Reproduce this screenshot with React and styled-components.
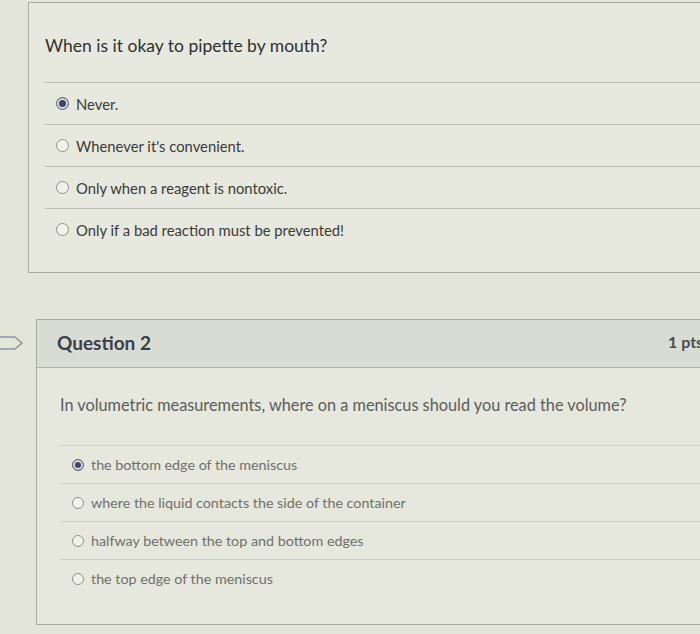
import React from 'react';
import styled, { createGlobalStyle } from 'styled-components';

const GlobalStyle = createGlobalStyle`
    html, body {
        margin: 0;
        padding: 0;
        background: #e3e5d9;
    }
    body {
        font-family: Lato, "Open Sans", "Liberation Sans", sans-serif;
    }
`

const Page = styled.div`
    width: 700px;
    height: 634px;
    overflow: hidden;
    background: #e3e5d9;
    display: flex;
    flex-direction: column;
`

const FirstCard = styled.div`
    margin-top: 2px;
    margin-left: 28px;
    width: 690px;
    flex-shrink: 0;
    border-top: 1px solid #a9aca3;
    border-left: 1px solid #a9aca3;
    border-bottom: 1px solid #a9aca3;
    background: #e7e9de;
    padding: 33px 0 22px 16px;
    box-sizing: border-box;
`

const BigQuestion = styled.div`
    font-size: 17.5px;
    color: #2f302e;
    line-height: 20px;
    margin-bottom: 26px;
`

const Answers = styled.div`
    display: flex;
    flex-direction: column;
`

const Answer = styled.div`
    display: flex;
    align-items: center;
    gap: ${p => p.$gap || 8}px;
    height: ${p => p.$h}px;
    border-top: 1px solid ${p => p.$line || '#b9bcb2'};
    padding-left: ${p => p.$pad}px;
    box-sizing: border-box;
    font-size: ${p => p.$size}px;
    color: ${p => p.$color};
`

const Radio = styled.span`
    width: ${p => p.$d}px;
    height: ${p => p.$d}px;
    border-radius: 50%;
    box-sizing: border-box;
    flex-shrink: 0;
    border: 1.5px solid ${p => (p.$on ? '#6d7080' : '#8d8f8a')};
    background: ${p => (p.$on ? '#3f4563' : '#f1f2ec')};
    box-shadow: ${p => (p.$on ? 'inset 0 0 0 2px #d9dbe3' : 'none')};
`

const Row = styled.div`
    display: flex;
    margin-top: 46px;
`

const Side = styled.div`
    width: 36px;
    flex-shrink: 0;
    height: 48px;
    display: flex;
    align-items: center;
`

const SecondCard = styled.div`
    width: 684px;
    flex-shrink: 0;
    border: 1px solid #a9aca3;
    border-right: none;
    background: #e6e8dd;
    height: 306px;
    box-sizing: border-box;
`

const Header = styled.div`
    height: 48px;
    background: #d9dcd2;
    border-bottom: 1px solid #aeb1a8;
    display: flex;
    align-items: center;
    justify-content: space-between;
    padding: 0 0 0 20px;
    box-sizing: border-box;
`

const Title = styled.div`
    font-size: 19px;
    font-weight: 700;
    color: #3a3f4e;
    margin-top: -3px;
`

const Points = styled.div`
    font-size: 16px;
    font-weight: 700;
    color: #4a4d52;
    width: 52px;
    margin-top: -4px;
`

const Body = styled.div`
    padding: 27px 0 0 23px;
`

const SmallQuestion = styled.div`
    font-size: 16.3px;
    color: #5b5d5c;
    line-height: 19px;
    margin-bottom: 31px;
`

const Tag = () => (
    <svg width="26" height="16" viewBox="0 0 26 16">
        <path d="M-3 2 H15 L22 8 L15 14 H-3 Z" fill="none" stroke="#8f94a3" strokeWidth="1.6" strokeLinejoin="round" />
    </svg>
)

const first = [
    { text: 'Never.', on: true },
    { text: "Whenever it's convenient." },
    { text: 'Only when a reagent is nontoxic.' },
    { text: 'Only if a bad reaction must be prevented!' },
]

const second = [
    { text: 'the bottom edge of the meniscus', on: true },
    { text: 'where the liquid contacts the side of the container' },
    { text: 'halfway between the top and bottom edges' },
    { text: 'the top edge of the meniscus' },
]

export default function App() {
    return (
        <Page>
            <GlobalStyle />
            <FirstCard>
                <BigQuestion>When is it okay to pipette by mouth?</BigQuestion>
                <Answers>
                    {first.map(a => (
                        <Answer key={a.text} $h={42} $pad={11} $gap={7} $size={14.8} $color="#3a3b39">
                            <Radio $d={13} $on={a.on} />
                            {a.text}
                        </Answer>
                    ))}
                </Answers>
            </FirstCard>
            <Row>
                <Side>
                    <Tag />
                </Side>
                <SecondCard>
                    <Header>
                        <Title>Question 2</Title>
                        <Points>1 pts</Points>
                    </Header>
                    <Body>
                        <SmallQuestion>
                            In volumetric measurements, where on a meniscus should you read the volume?
                        </SmallQuestion>
                        <Answers>
                            {second.map(a => (
                                <Answer key={a.text} $h={38} $pad={12} $gap={7} $size={14.3} $color="#6e706c" $line="#cdd0c6">
                                    <Radio $d={12} $on={a.on} />
                                    {a.text}
                                </Answer>
                            ))}
                        </Answers>
                    </Body>
                </SecondCard>
            </Row>
        </Page>
    );
}
